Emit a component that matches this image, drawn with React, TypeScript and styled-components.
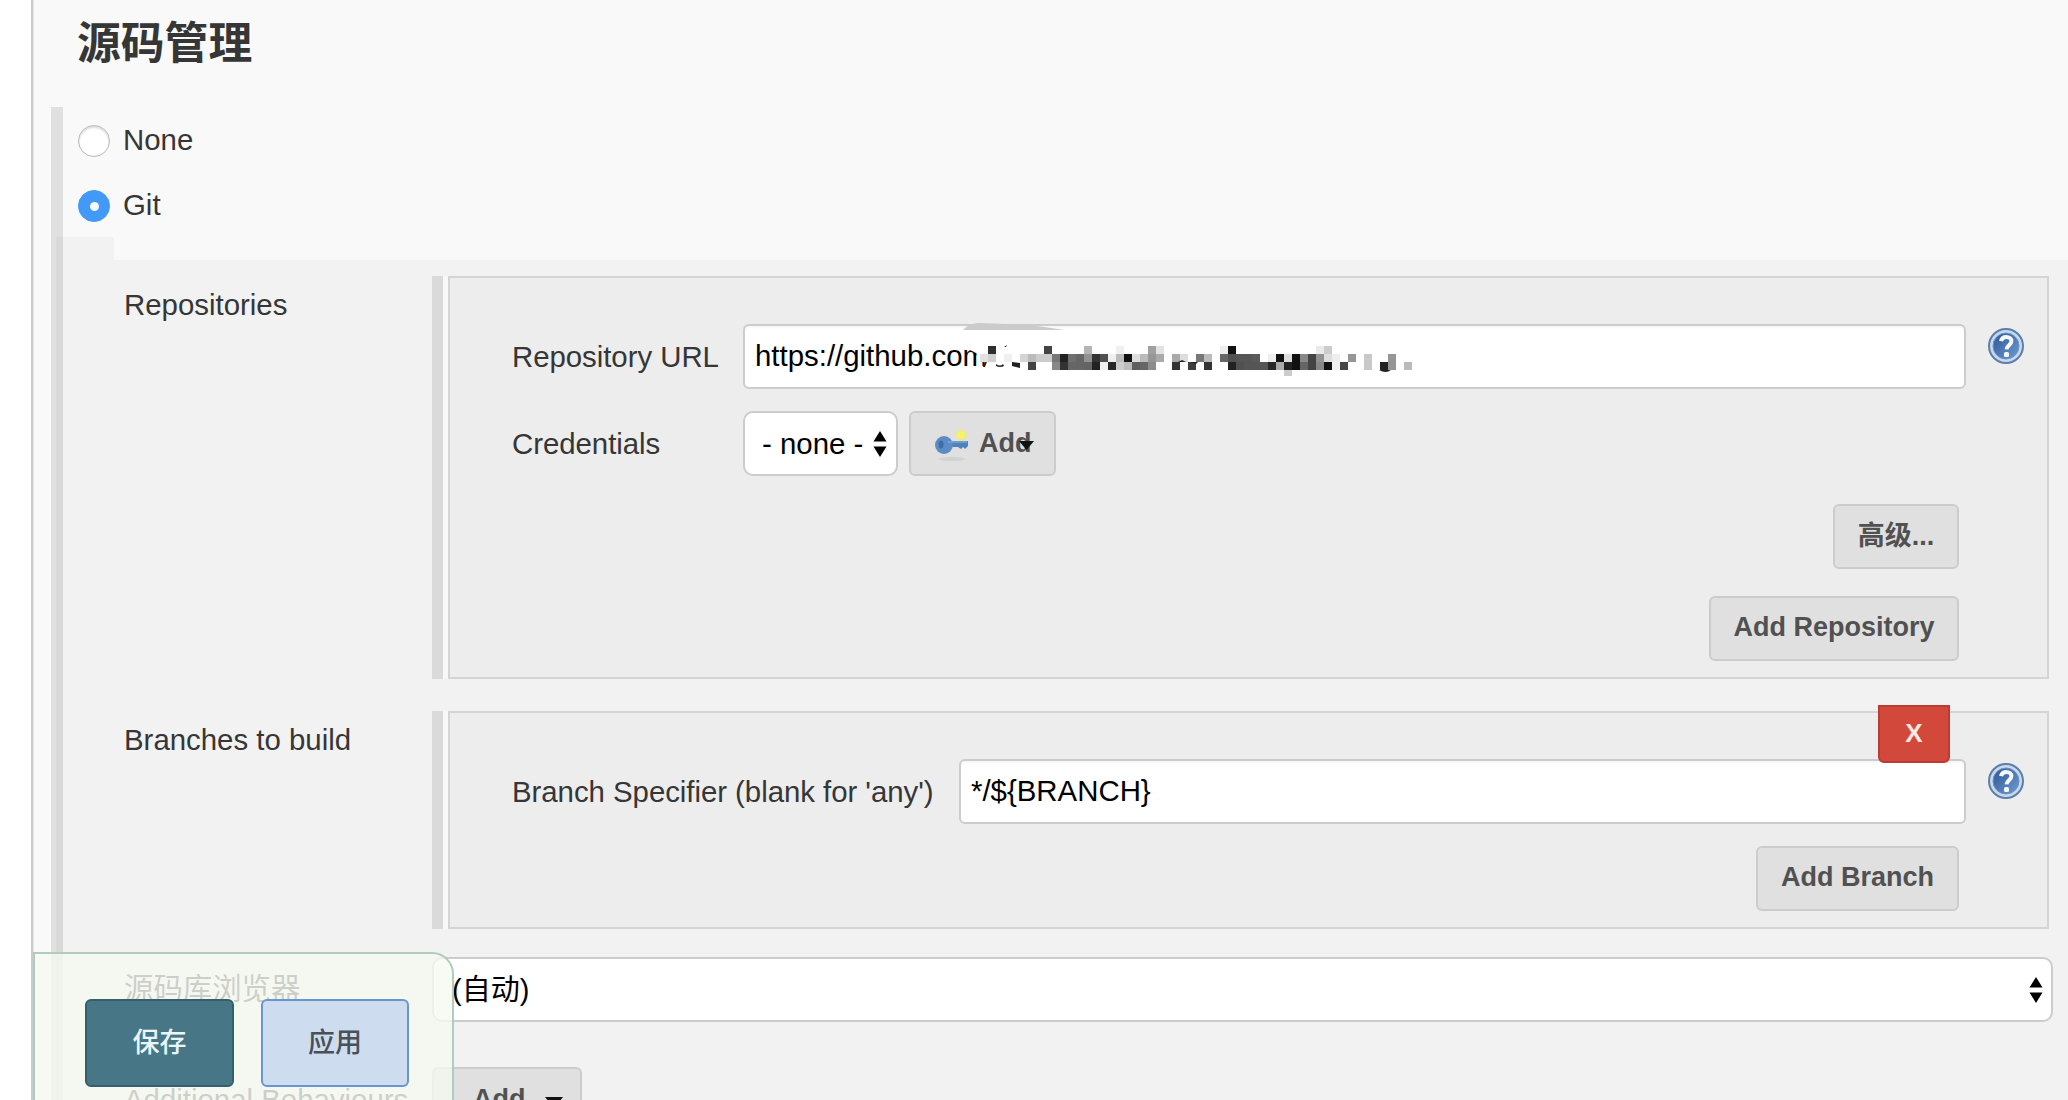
import styled, { createGlobalStyle, css } from 'styled-components';
import type { ReactNode } from 'react';

const GlobalStyle = createGlobalStyle`
	* {
		box-sizing: border-box;
	}

	body {
		margin: 0;
		background: #fff;
		color: #363636;
		font-family: 'Liberation Sans', 'Noto Sans CJK SC', sans-serif;
		font-size: 29.4px;
		overflow: hidden;
	}
`;

const Page = styled.div`
	position: relative;
	height: 1100px;
	padding-left: 31px;
	overflow: hidden;
`;

const Panel = styled.main`
	height: 100%;
	background: #f9f9f9;
	border-left: 2px solid #ccc;
	box-shadow: inset 1px 0 0 #e4e4e4;
`;

const Heading = styled.h1`
	margin: 0;
	height: 107px;
	padding: 11px 0 0 44px;
	font-size: 43.8px;
	line-height: 66px;
	font-weight: 700;
`;

const RadioGroup = styled.div`
	margin-left: 18px;
	height: 130px;
	border-left: 12px solid #e0e0e0;
	padding-left: 15px;
`;

const RadioRow = styled.div`
	display: flex;
	align-items: center;
	height: 65px;
	gap: 13px;
`;

const Radio = styled.span<{ $checked?: boolean }>`
	display: flex;
	align-items: center;
	justify-content: center;
	width: 32px;
	height: 32px;
	margin-top: 3px;
	border-radius: 50%;
	background: #fff;
	border: 1.5px solid #b9b9b9;
	box-shadow: inset 0 2px 2px #ddd;

	${(props) =>
		props.$checked &&
		css`
			background: #4299f7;
			border-color: #4299f7;
			box-shadow: none;

			&::after {
				content: '';
				width: 9px;
				height: 9px;
				border-radius: 50%;
				background: #f2fbff;
			}
		`}
`;

const GitOuter = styled.div`
	margin-left: 18px;
	border-left: 5px solid #e0e0e0;
`;

const GitInner = styled.div`
	height: 863px;
	border-left: 7px solid #d9d9d9;
	background: #f2f2f2;
`;

const Strip = styled.div`
	height: 23px;
	margin-left: 51px;
	background: #f9f9f9;
`;

const Entry = styled.section<{ $height: number; $gap: number }>`
	display: grid;
	grid-template-columns: 369px 1fr;
	height: ${(props) => props.$height}px;
	margin-top: ${(props) => props.$gap}px;
`;

const Label = styled.div<{ $drop?: number }>`
	padding: ${(props) => props.$drop ?? 10}px 0 0 61px;
	line-height: 38px;
	white-space: nowrap;
`;

const Chunk = styled.div`
	width: 1617px;
	border-left: 11px solid #dadada;
	padding-left: 5px;
	background: #f8f8f8;
`;

const Box = styled.div`
	height: 100%;
	background: #ededed;
	border: 2px solid #d4d4d4;
	padding: 46px 23px 0 62px;
`;

const Field = styled.div<{ $gap?: number }>`
	display: flex;
	align-items: center;
	height: 65px;
	margin-top: ${(props) => props.$gap ?? 0}px;
`;

const FieldLabel = styled.span<{ $width: number }>`
	width: ${(props) => props.$width}px;
	white-space: nowrap;
	letter-spacing: -0.04px;
`;

const TextInput = styled.div`
	position: relative;
	flex: 1;
	display: flex;
	align-items: center;
	height: 65px;
	padding: 0 0 1px 10px;
	background: #fff;
	border: 2px solid #ccc;
	border-radius: 6px;
	box-shadow: inset 0 2px 2px #f7f7f7;
	color: #000;
`;

const Select = styled.div<{ $wide?: boolean }>`
	display: flex;
	align-items: center;
	justify-content: space-between;
	width: ${(props) => (props.$wide ? 1621 : 155)}px;
	height: 65px;
	padding: ${(props) => (props.$wide ? '0 8px 0 18px' : '0 9px 0 17px')};
	background: #fff;
	border: 2px solid #ccc;
	border-radius: 10px;
	color: #000;
	white-space: nowrap;
`;

const SelectValue = styled.span`
	padding-bottom: 5px;
	font-size: 29px;
`;

const HelpButton = styled.span`
	width: 36px;
	height: 36px;
	margin: -22px 0 0 22px;

	svg {
		display: block;
	}
`;

const Button = styled.div<{ $width: number }>`
	display: flex;
	align-items: center;
	justify-content: center;
	width: ${(props) => props.$width}px;
	height: 65px;
	padding-bottom: 2px;
	background: #e0e0e0;
	border: 2px solid #ccc;
	border-radius: 6px;
	color: #515151;
	font-size: 27px;
	font-weight: 700;
	white-space: nowrap;
`;

const AddButton = styled(Button)`
	position: relative;
	justify-content: flex-start;
	margin-left: 11px;
	padding: 0 0 1px 24px;
`;

const KeyIcon = styled.svg`
	margin: 4px 10px 0 0;
`;

const MenuArrow = styled.svg`
	position: absolute;
	right: 20px;
	top: 28px;
`;

const Actions = styled.div<{ $gap: number }>`
	display: flex;
	justify-content: flex-end;
	margin: ${(props) => props.$gap}px 65px 0 0;
`;

const AdvancedButton = styled(Button)`
	padding-bottom: 6px;
`;

const DeleteButton = styled.div`
	position: absolute;
	right: 14px;
	top: -56px;
	display: flex;
	align-items: center;
	justify-content: center;
	width: 72px;
	height: 58px;
	padding-bottom: 2px;
	background: #d2483b;
	border: 2px solid #bd3b30;
	border-radius: 0 0 6px 6px;
	color: #fbe9e2;
	font-size: 26px;
	font-weight: 700;
`;

const Censor = styled.svg`
	position: absolute;
	left: 215px;
	top: -6px;
`;

const BottomButton = styled(Button)`
	justify-content: flex-start;
	padding: 0 0 1px 39px;
	gap: 20px;

	svg {
		margin-top: 7px;
	}
`;

const SaveBar = styled.footer`
	position: absolute;
	left: 33px;
	top: 952px;
	display: flex;
	gap: 27px;
	width: 421px;
	height: 170px;
	padding: 45px 0 0 50px;
	background: rgba(246, 250, 241, 0.78);
	border: 2px solid #afccbd;
	border-radius: 0 22px 0 0;
`;

const SaveButton = styled.div<{ $primary?: boolean }>`
	display: flex;
	align-items: center;
	justify-content: center;
	width: ${(props) => (props.$primary ? 149 : 148)}px;
	height: 88px;
	padding-bottom: 5px;
	border-radius: 6px;
	border: 2px solid ${(props) => (props.$primary ? '#365f6c' : '#6896d0')};
	background: ${(props) => (props.$primary ? '#477786' : '#cddcee')};
	color: ${(props) => (props.$primary ? '#e9f6fa' : '#4a4f58')};
	font-size: 27px;
	font-weight: 500;
`;

const Arrows = () => (
	<svg width="14" height="26" viewBox="0 0 14 26">
		<path d="M7 0 13.5 10.5H.5ZM.5 15.5h13L7 26Z" fill="#000" />
	</svg>
);

const Help = () => (
	<HelpButton>
		<svg width="36" height="36" viewBox="0 0 36 36">
			<defs>
				<linearGradient id="help" x1="0" y1="0" x2="1" y2="1">
					<stop offset="0" stopColor="#2c5596" />
					<stop offset="1" stopColor="#6f9bd0" />
				</linearGradient>
			</defs>
			<circle cx="18" cy="18" r="17" fill="#c5d9ee" stroke="#5d7eaa" strokeWidth="2" />
			<circle cx="18" cy="18" r="13" fill="url(#help)" stroke="#6f92c1" />
			<path
				d="M13 13.2c.6-3 2.600-4.200 5.200-4.200 3 0 5.200 1.600 5.200 4.300 0 3.700-4.700 4-4.900 8"
				fill="none"
				stroke="#f4f8ff"
				strokeWidth="4"
			/>
			<rect x="16" y="24" width="5" height="5" rx="1.500" fill="#f4f8ff" />
		</svg>
	</HelpButton>
);

const Key = () => (
	<KeyIcon width="34" height="34" viewBox="0 0 34 34">
		<ellipse cx="17" cy="31" rx="13" ry="2" fill="#d2d2d2" />
		<circle cx="26" cy="7" r="6" fill="#e9e6a0" />
		<circle cx="26" cy="7" r="4" fill="#f6f26a" />
		<path d="M13 13h20v5l-3 3-2-2-2 2-3-2H13Z" fill="#4c82bd" />
		<circle cx="9" cy="17" r="9" fill="#5b8cc4" />
		<ellipse cx="6" cy="16.500" rx="2.500" ry="4" fill="#3f6da5" />
		<path d="M13 14h19" stroke="#7ba6d6" strokeWidth="1.500" />
	</KeyIcon>
);

// [column, grey level] for each line of 8px blocks
const blocks: [number, number][][] = [
	[[3, 46], [10, 68], [15, 180], [19, 240], [23, 160], [24, 226], [32, 238], [33, 17], [44, 234], [45, 204]],
	[
		[2, 225], [3, 208], [5, 240], [7, 212], [8, 187], [9, 204], [10, 204], [11, 119], [12, 34], [13, 112],
		[14, 102], [15, 145], [16, 51], [17, 80], [18, 238], [19, 187], [20, 17], [21, 221], [22, 187], [23, 150],
		[24, 170], [26, 170], [27, 221], [29, 119], [30, 187], [32, 102], [33, 80], [34, 85], [35, 85], [36, 90],
		[38, 238], [39, 17], [40, 221], [41, 17], [42, 136], [43, 68], [44, 145], [45, 221], [46, 238], [48, 150],
		[50, 200], [53, 150]
	],
	[
		[8, 68], [11, 136], [12, 51], [13, 102], [14, 102], [15, 100], [16, 34], [17, 240], [18, 40], [19, 204],
		[20, 187], [21, 95], [22, 102], [23, 140], [26, 51], [28, 62], [30, 51], [33, 34], [34, 80], [35, 85],
		[36, 85], [37, 85], [38, 40], [39, 170], [40, 34], [41, 17], [42, 102], [43, 68], [44, 136], [45, 17],
		[46, 240], [47, 70], [50, 200], [52, 34], [53, 150], [55, 187]
	]
];

const CensoredPath = () => (
	<Censor width="470" height="60" viewBox="0 0 470 60">
		<path d="M3 10C8 5 12 3 20 3L70 5Q92 8 105 10Z" fill="#cbcbcb" />
		<path d="M3 12h467v48H24V41l-8-8-8-4-5-1Z" fill="#fff" />
		<path d="m23 47 2-7 3-1-3 8ZM36 44q4 3 7 0l1 2q-4 2-8 0ZM52 42l8 1v5l-8-2ZM44 27l3-2-1 2Z" fill="#222" />
		{blocks.map((line, row) =>
			line.map(([col, grey]) => (
				<rect
					key={`${row}-${col}`}
					x={4 + col * 8}
					y={26 + row * 8}
					width="8"
					height="8"
					fill={`rgb(${grey}, ${grey}, ${grey})`}
				/>
			))
		)}
		<path d="M324 50h8v6h-8Z" fill="#ccc" />
		<path d="M419 50h12q-5 4-12 0ZM210 42h8l4-2 4 2ZM230 42h8l-2 2ZM259 42h7Z" fill="#222" />
	</Censor>
);

type EntryProps = {
	label: string;
	height: number;
	gap: number;
	children: ReactNode;
};

const RepeatableEntry = ({ label, height, gap, children }: EntryProps) => (
	<Entry $height={height} $gap={gap}>
		<Label>{label}</Label>
		<Chunk>
			<Box>{children}</Box>
		</Chunk>
	</Entry>
);

const App = () => (
	<Page>
		<GlobalStyle />
		<Panel>
			<Heading>源码管理</Heading>
			<RadioGroup>
				<RadioRow>
					<Radio />
					None
				</RadioRow>
				<RadioRow>
					<Radio $checked />
					Git
				</RadioRow>
			</RadioGroup>
			<GitOuter>
				<GitInner>
					<Strip />
					<RepeatableEntry label="Repositories" height={403} gap={16}>
						<Field>
							<FieldLabel $width={231}>Repository URL</FieldLabel>
							<TextInput>
								https://github.com
								<CensoredPath />
							</TextInput>
							<Help />
						</Field>
						<Field $gap={22}>
							<FieldLabel $width={231}>Credentials</FieldLabel>
							<Select>
								- none -
								<Arrows />
							</Select>
							<AddButton $width={147}>
								<Key />
								Add
								<MenuArrow width="15" height="9" viewBox="0 0 15 9">
									<path d="M0 0h15L7.5 9Z" fill="#111" />
								</MenuArrow>
							</AddButton>
						</Field>
						<Actions $gap={28}>
							<AdvancedButton $width={126}>高级...</AdvancedButton>
						</Actions>
						<Actions $gap={27}>
							<Button $width={250}>Add Repository</Button>
						</Actions>
					</RepeatableEntry>
					<RepeatableEntry label="Branches to build" height={218} gap={32}>
						<Field>
							<FieldLabel $width={447}>Branch Specifier (blank for 'any')</FieldLabel>
							<TextInput>
								{'*/${BRANCH}'}
								<DeleteButton>X</DeleteButton>
							</TextInput>
							<Help />
						</Field>
						<Actions $gap={22}>
							<Button $width={203}>Add Branch</Button>
						</Actions>
					</RepeatableEntry>
					<Entry $height={65} $gap={28}>
						<Label $drop={13}>源码库浏览器</Label>
						<Select $wide>
							<SelectValue>(自动)</SelectValue>
							<Arrows />
						</Select>
					</Entry>
					<Entry $height={65} $gap={45}>
						<Label $drop={14}>Additional Behaviours</Label>
						<BottomButton $width={150}>
							Add
							<svg width="18" height="11" viewBox="0 0 18 11">
								<path d="M0 0h18L9 11Z" fill="#111" />
							</svg>
						</BottomButton>
					</Entry>
				</GitInner>
			</GitOuter>
		</Panel>
		<SaveBar>
			<SaveButton $primary>保存</SaveButton>
			<SaveButton>应用</SaveButton>
		</SaveBar>
	</Page>
);

export default App;
